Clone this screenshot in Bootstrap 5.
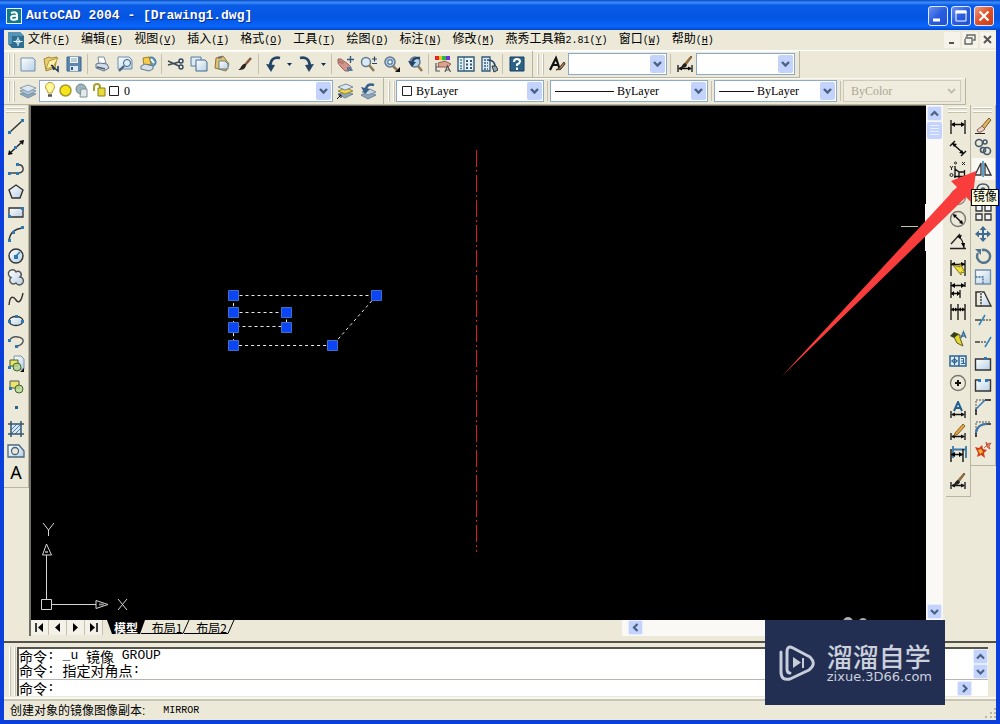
<!DOCTYPE html>
<html lang="zh-CN">
<head>
<meta charset="utf-8">
<meta name="viewport" content="width=device-width, initial-scale=1">
<title>AutoCAD 2004 - [Drawing1.dwg]</title>
<link href="https://cdn.jsdelivr.net/npm/bootstrap@5.3.0/dist/css/bootstrap.min.css" rel="stylesheet">
<style>
:root{--face:#ece9d8;--edge:#b9b5a3}
body{font:12px/16px "Liberation Sans","Noto Sans CJK SC",sans-serif;color:#000;background:var(--face)}
button{color:#000}
.frame{border:solid #0b3fdc;border-width:0 4px 4px}
.titlebar{height:30px;margin:0 -4px;padding:2px 6px 0;background:linear-gradient(#0a48c8,#3a8cf8 8%,#0a5ce8 18%,#0455e2 60%,#0a66fc 88%,#0448c8);color:#fff}
.titlebar h1{font:bold 13px/18px "Liberation Mono",monospace;text-shadow:1px 1px #0a2f90}
.winbtns{gap:3px}
.winbtn{width:20px;height:20px;padding:0;border:1px solid #dfe9ff;border-radius:3px;background:linear-gradient(135deg,#6c93f2,#2a5ce0 50%,#2250d0);line-height:0}
.winbtn.shut{background:linear-gradient(135deg,#f09a7c,#dd5028 50%,#c83c18)}
.menubar{height:20px}
.menubar a{color:#000;text-decoration:none;margin-right:11px;white-space:nowrap;line-height:18px}
.menubar kbd{all:unset;font:10px/18px "Liberation Mono",monospace}
.mdis{gap:2px}
.mdi{width:16px;height:16px;padding:0;border:0;background:#f6f4ea;line-height:0}
.bars{border-top:1px solid #fff}
.strip{height:27px;border-right:1px solid var(--edge);border-bottom:1px solid var(--edge);box-shadow:inset 0 1px #fbfaf3}
.grip{width:6px;height:21px;margin-right:2px;border:solid #fff;border-width:0 1px;box-shadow:1px 0 #c5c1ae,inset 1px 0 #c5c1ae;flex:none}
.tool{width:23px;height:22px;padding:0;border:0;background:none;display:flex;align-items:center;justify-content:center;flex:none}
.tool svg{width:18px;height:18px}
.more{width:11px}
.vsep{width:1px;height:20px;margin:0 2px;background:#c5c1ae;flex:none}
.combo + .vsep{margin-left:3px}
.combo{height:22px;border:1px solid #8ba9c8;background:#fff;padding:1px 1px 1px 4px;flex:none}
.combo select{appearance:none;border:0;padding:0 16px 0 3px;height:18px;min-width:0;outline:0;color:#000;font:12px/18px "Liberation Serif",serif;background:url("data:image/svg+xml,%3Csvg xmlns='http://www.w3.org/2000/svg' width='15' height='18'%3E%3Crect width='15' height='18' rx='2' fill='%23c3d3fb'/%3E%3Cpath d='M4 7l3.5 3.5L11 7' fill='none' stroke='%234a6186' stroke-width='2.4'/%3E%3C/svg%3E") right center no-repeat}
.combo.off{background:#f0eddf;border-color:#cdcabd}
.combo.off select{color:#aaa794;opacity:1;background-image:url("data:image/svg+xml,%3Csvg xmlns='http://www.w3.org/2000/svg' width='15' height='18'%3E%3Cpath d='M4 7l3.5 3.5L11 7' fill='none' stroke='%23c2bfae' stroke-width='2'/%3E%3C/svg%3E")}
.rail{width:25px;padding:10px 0 4px;border-right:1px solid var(--edge);border-bottom:1px solid var(--edge);position:relative;display:grid;grid-auto-rows:1fr;justify-items:center}
.rail::before{content:"";position:absolute;left:2px;right:3px;top:2px;height:5px;border:solid #fff;border-width:1px 0;box-shadow:0 1px #c5c1ae,inset 0 1px #c5c1ae}
.rail .tool{height:auto;min-height:0}
.rail-draw{height:383px}.rail-mod{height:361px}
.rail.rail-dim{display:block}
.rail.rail-dim .tool{height:22px}
.rail-dim hr{height:1px;margin:2px 3px;border:0;background:#bdb9a7;opacity:1}
.letter{font:18px/20px "Noto Sans",sans-serif}
.hot{background:#f9f8f3!important}
.canvas{background:#000;border:solid #716f64;border-width:1px 0 0 2px;min-height:0}
.canvas svg{display:block;width:100%;height:100%}
.track{background:#faf9f6}
.vscroll{width:17px;padding:1px}
.rails{padding-left:3px}
.sb{width:15px;height:15px;padding:0;border:1px solid #e6edff;border-radius:2px;background:#c3d3fb;line-height:0;display:block;flex:none}
.thumb{height:17px;margin-top:1px;border-radius:2px;background:repeating-linear-gradient(#e8efff 0 1px,#c3d3fb 1px 3px);border:3px solid #c3d3fb}
.sheets{height:16px;border-left:2px solid #716f64}
.sheets .nav-key{width:18px;height:15px;padding:0;border:0;border-right:1px solid #c5c1ae;background:#f4f2e8;line-height:0}
.sheet{padding:0;border:0;background:none;font:12px/14px "Noto Sans CJK SC",sans-serif;height:15px;position:relative}
.sheet svg{position:absolute;left:0;top:0;width:100%;height:14px;overflow:visible}
.sheet span{position:relative}
.hscroll{width:305px;padding-left:6px}
.cmd{margin-top:5px;border-top:2px solid #55534a;padding:4px 8px 3px 5px}
.cmd .grip{height:auto}
.cmdbox{border:solid #55534a;border-width:2px 0 0 2px;background:#fff;font:14px/14px "Noto Sans CJK SC",sans-serif}
.cmdbox i{font:13px/14px "Liberation Mono",monospace;white-space:pre}
.cmdline{display:flex;align-items:center;height:14px}
.cmdbox .ask{height:17px;border-top:1px solid #b7b5ad}
.cmdbox input{border:0;outline:0;padding:0;min-width:0;height:14px}
.status{height:21px;border-top:2px solid #c9c6b8;box-shadow:0 -2px #f8f7f0;padding:0 0 0 6px;line-height:20px}
.status b{font:10px/20px "Liberation Mono",monospace;margin-left:18px}
.tip{position:absolute;left:971px;top:189px;padding:0 1px;background:#ffffe1;border:1px solid #000;line-height:15px;white-space:nowrap;z-index:5}
.pointer{position:absolute;left:780px;top:168px;width:200px;height:210px;z-index:4;pointer-events:none}
.stamp{position:absolute;left:765px;top:620px;width:180px;height:85px;background:#232f52;color:#cbd0dc;z-index:6;padding:0 13px 0 14px}
.stamp strong{font:500 26px/28px "Noto Sans CJK SC",sans-serif}
.stamp small{font:13px/13px "DejaVu Sans",sans-serif}
</style>
</head>
<body>
<svg width="0" height="0" class="position-absolute" aria-hidden="true"><defs>
<linearGradient id="pg" x1="0" y1="0" x2="1" y2="1"><stop offset="0" stop-color="#fff"/><stop offset="1" stop-color="#b7cfe4"/></linearGradient>
<g id="dimline" fill="none" stroke="#111"><path d="M2 10v7M16 10v7M3 13.500h12" stroke-width="1.300"/><path d="M2 13.500l4-2v4zM16 13.500l-4-2v4z" fill="#111" stroke="none"/></g>
<g id="pencil"><path d="M6 10l8-9 2 2-7 8-4 2z" fill="#e8a53c" stroke="#6b4a1c" stroke-width=".8"/></g>
<g id="brush"><path d="M15 1l1 1-6 8-2-1z" fill="#a8743e" stroke="#5a3c1c" stroke-width=".7"/><path d="M9 8l2 2c-1 3-4 3-7 3 2-1 2-4 5-5z" fill="#222"/></g>
</defs></svg>

<div class="frame min-vh-100 d-flex flex-column">
<header class="titlebar d-flex align-items-center">
  <svg width="16" height="16" viewBox="0 0 16 16" class="me-1"><rect width="16" height="16" fill="#e9f4f6"/><rect x="1" y="1" width="14" height="14" fill="#14798b"/><path d="M5 5q6-2 6 2v5M11 8q-6-1-6 2t6 1" fill="none" stroke="#fff" stroke-width="2"/></svg>
  <h1 class="m-0 flex-fill">AutoCAD 2004 - [Drawing1.dwg]</h1>
  <div class="winbtns d-flex">
    <button class="winbtn" aria-label="最小化"><svg width="18" height="18"><path d="M4 13h7" stroke="#fff" stroke-width="3"/></svg></button>
    <button class="winbtn" aria-label="最大化"><svg width="18" height="18"><path d="M4 5v9h10V4H4z" fill="none" stroke="#fff"/><path d="M3.500 5h11" stroke="#fff" stroke-width="3"/></svg></button>
    <button class="winbtn shut" aria-label="关闭"><svg width="18" height="18"><path d="M4.500 4.500l9 9m0-9l-9 9" stroke="#fff" stroke-width="2.200"/></svg></button>
  </div>
</header>

<nav class="menubar d-flex align-items-center ps-1">
  <svg width="16" height="16" viewBox="0 0 16 16" class="me-1 flex-shrink-0"><path d="M0 0h12l4 4v12H4l-4-4z" fill="#2e6e93"/><path d="M0 0h4v12L0 12zM0 0h12l4 4H5z" fill="#5794b5"/><path d="M10 5v9M5.500 9.500h9" stroke="#fff"/><circle cx="10" cy="9.500" r="2" fill="none" stroke="#bde6f2"/></svg>
  <span class="d-flex flex-fill">
  <a href="#">文件<kbd>(<u>F</u>)</kbd></a><a href="#">编辑<kbd>(<u>E</u>)</kbd></a><a href="#">视图<kbd>(<u>V</u>)</kbd></a><a href="#">插入<kbd>(<u>I</u>)</kbd></a><a href="#">格式<kbd>(<u>O</u>)</kbd></a><a href="#">工具<kbd>(<u>T</u>)</kbd></a><a href="#">绘图<kbd>(<u>D</u>)</kbd></a><a href="#">标注<kbd>(<u>N</u>)</kbd></a><a href="#">修改<kbd>(<u>M</u>)</kbd></a><a href="#">燕秀工具箱<kbd>2.81(<u>Y</u>)</kbd></a><a href="#">窗口<kbd>(<u>W</u>)</kbd></a><a href="#">帮助<kbd>(<u>H</u>)</kbd></a>
  </span>
  <span class="mdis d-flex">
    <button class="mdi" aria-label="最小化窗口"><svg width="16" height="16"><path d="M5 11h5" stroke="#555" stroke-width="2"/></svg></button>
    <button class="mdi" aria-label="还原窗口"><svg width="16" height="16"><path d="M5 5V3h8v5h-2M3 7v5h7V6H3" fill="none" stroke="#666" stroke-width="1.400"/></svg></button>
    <button class="mdi" aria-label="关闭窗口"><svg width="16" height="16"><path d="M4 4l7 7m0-7l-7 7" stroke="#555" stroke-width="2"/></svg></button>
  </span>
</nav>

<div class="bars">
<div class="d-flex">
  <div class="strip d-flex align-items-center ps-1">
    <span class="grip"></span>
    <button class="tool" aria-label="新建"><svg viewBox="0 0 18 18"><path d="M2 3h12l2 2v11H2z" fill="url(#pg)" stroke="#6f8fb0"/></svg></button>
    <button class="tool" aria-label="打开"><svg viewBox="0 0 18 18"><path d="M2 4l5-2 2 1 6-1-2 11-9 3z" fill="#e8ce73" stroke="#a58a35"/><path d="M4 14l3-8 9-3-5 9z" fill="#fff1a7" stroke="#b79b3e"/><path d="M9 10l7 6v-5M10 10l2 5" stroke="#223a55" fill="none" stroke-width="1.600"/></svg></button>
    <button class="tool" aria-label="保存"><svg viewBox="0 0 18 18"><path d="M2 2h14v14H2z" fill="#5f87ae" stroke="#3c638c"/><path d="M5 2h8v6H5z" fill="#edf5fb"/><path d="M6 4h6M6 6h6" stroke="#8aa"/><path d="M5 11h8v5H5z" fill="#dce9f3"/><path d="M6 12h2v3H6z" fill="#34597f"/></svg></button>
    <span class="vsep"></span>
    <button class="tool" aria-label="打印"><svg viewBox="0 0 18 18"><path d="M5 2l6 0 2 6-7 1z" fill="#fff" stroke="#7b8ea3"/><path d="M3 9l4-1 7 1 2 4-5 3-8-3z" fill="#d4dbe5" stroke="#60758c"/><path d="M4 12l8 2" stroke="#45627f" stroke-width="1.500"/></svg></button>
    <button class="tool" aria-label="打印预览"><svg viewBox="0 0 18 18"><path d="M2 2h11l3 3v9H2z" fill="url(#pg)" stroke="#6f8fb0"/><circle cx="11" cy="8" r="3.500" fill="#dcefff" stroke="#3c5a78"/><path d="M8 11l-5 5" stroke="#496580" stroke-width="2.400"/></svg></button>
    <button class="tool" aria-label="发布"><svg viewBox="0 0 18 18"><circle cx="12" cy="7" r="5" fill="#5d9bc7" stroke="#47718f"/><path d="M4 3l6-1 2 7-7 2z" fill="#f6cc4c" stroke="#a37e25"/><path d="M2 11l4-2 8 2v3l-4 2-8-2z" fill="#d9dfe7" stroke="#627890"/><path d="M12 4l3 4" stroke="#fff" stroke-width="2"/></svg></button>
    <span class="vsep"></span>
    <button class="tool" aria-label="剪切"><svg viewBox="0 0 18 18"><path d="M1 6l11 5M1 10l11-3" stroke="#3d4b59" stroke-width="1.500"/><circle cx="14" cy="6" r="2" fill="none" stroke="#33475d" stroke-width="1.400"/><circle cx="14" cy="12" r="2" fill="none" stroke="#33475d" stroke-width="1.400"/></svg></button>
    <button class="tool" aria-label="复制"><svg viewBox="0 0 18 18"><path d="M1 2h10v9H1z" fill="#dceaf5" stroke="#557b9e"/><path d="M6 5h9l2 2v9H6z" fill="url(#pg)" stroke="#41698f"/></svg></button>
    <button class="tool" aria-label="粘贴"><svg viewBox="0 0 18 18"><path d="M3 3l7-2 6 8-3 7-11-3z" fill="#e0c26c" stroke="#8f7736"/><path d="M6 6h6l3 3v5H6z" fill="url(#pg)" stroke="#6b7d8c"/><path d="M5 3l4-1" stroke="#69747e" stroke-width="2"/></svg></button>
    <button class="tool" aria-label="特性匹配"><svg viewBox="0 0 18 18"><path d="M15 3L8 11" stroke="#87593a" stroke-width="2.600"/><path d="M10 9c0 5-3 6-8 6 3-1 3-5 6-6z" fill="#2b2520"/></svg></button>
    <span class="vsep"></span>
    <button class="tool" aria-label="放弃"><svg viewBox="0 0 18 18"><path d="M16 3Q7 1 6 11" fill="none" stroke="#244466" stroke-width="2.600"/><path d="M2 9l5 8 4-7z" fill="#244466"/></svg></button>
    <button class="tool more" aria-label="放弃列表"><svg viewBox="0 0 11 18"><path d="M3 8h5l-2.500 3z" fill="#12305e"/></svg></button>
    <button class="tool" aria-label="重做"><svg viewBox="0 0 18 18"><path d="M2 3Q11 1 12 11" fill="none" stroke="#244466" stroke-width="2.600"/><path d="M16 9l-5 8-4-7z" fill="#244466"/></svg></button>
    <button class="tool more" aria-label="重做列表"><svg viewBox="0 0 11 18"><path d="M3 8h5l-2.500 3z" fill="#12305e"/></svg></button>
    <span class="vsep"></span>
    <button class="tool" aria-label="实时平移"><svg viewBox="0 0 18 18"><path d="M1 4l3 0 7 5 3 3-2 4H8L4 12 1 8z" fill="#d6958a" stroke="#9b6259"/><path d="M2 7l4 2M1 5l6 3" stroke="#a86d64"/><path d="M10 12l4 0 2 4h-6z" fill="#58799f"/><path d="M13.500 1v7M10 4.500h7" stroke="#345577" stroke-width="1.300"/></svg></button>
    <button class="tool" aria-label="实时缩放"><svg viewBox="0 0 18 18"><circle cx="6" cy="7" r="4.500" fill="#d8eaf6" stroke="#65798c" stroke-width="1.500"/><path d="M9 10l5 6" stroke="#8c7a55" stroke-width="2.500"/><path d="M12 4h5M14.500 1.500v5M12 8.500h5" stroke="#244466" stroke-width="1.200"/></svg></button>
    <button class="tool" aria-label="窗口缩放"><svg viewBox="0 0 18 18"><circle cx="7" cy="7" r="5" fill="#b6d3e9" stroke="#65798c" stroke-width="1.500"/><path d="M5 5h4v4H5z" fill="#fff" stroke="#2d5e8d"/><path d="M10 11l4 4" stroke="#8c7a55" stroke-width="2.500"/><path d="M17 12v5h-5z" fill="#111"/></svg></button>
    <button class="tool" aria-label="缩放上一个"><svg viewBox="0 0 18 18"><circle cx="9" cy="7" r="5" fill="#b6d3e9" stroke="#65798c" stroke-width="1.500"/><path d="M12 11l4 5" stroke="#8c7a55" stroke-width="2.500"/><path d="M14 3Q7 2 6 8" fill="none" stroke="#244466" stroke-width="2.400"/><path d="M2 6l4 6 4-5z" fill="#244466"/></svg></button>
    <span class="vsep"></span>
    <button class="tool" aria-label="特性"><svg viewBox="0 0 18 18"><path d="M1 1h4v4H1z" fill="#e22"/><path d="M5 1h3v4H5z" fill="#e6c91c"/><path d="M8 1h4v4H8z" fill="#2aba45"/><path d="M12 1h4v4h-4z" fill="#6c35d8"/><path d="M4 8l7-2 6 3-3 3-9 0z" fill="#dca28d" stroke="#945d4c"/><path d="M2 8v8h4M2 12h3M11 17l2.500-6 3 6M12 15h4" fill="none" stroke="#555" stroke-width="1.200"/></svg></button>
    <button class="tool" aria-label="设计中心"><svg viewBox="0 0 18 18"><path d="M1 2h16v14H1z" fill="#eaf4fa" stroke="#315878" stroke-width="1.400"/><path d="M7 2v14" stroke="#315878"/><path d="M3 5h2M3 8h2M3 11h2M3 13.500h2" stroke="#3e8496" stroke-width="1.500"/><path d="M9 5h2v2H9zM13 5h2v2h-2zM9 8.500h2v2H9zM13 8.500h2v2h-2zM9 12h2v2H9zM13 12h2v2h-2z" fill="#315878"/></svg></button>
    <button class="tool" aria-label="工具选项板"><svg viewBox="0 0 18 18"><path d="M2 2h8v14H2z" fill="#dcecf7" stroke="#315878" stroke-width="1.300"/><path d="M4 5h4M4 8h4M4 11h4M4 14h4" stroke="#315878" stroke-width="1.500" stroke-dasharray="2 1"/><path d="M8 5q7 0 7 7" fill="none" stroke="#244466" stroke-width="1.500"/><path d="M12 11h4l2 4-4 2z" fill="#8fa9bb" stroke="#333"/></svg></button>
    <span class="vsep"></span>
    <button class="tool" aria-label="帮助"><svg viewBox="0 0 18 18"><path d="M2 2h14v14H2z" fill="#2b6387" stroke="#163f60"/><path d="M6 7q0-3 3-3t3 2.500q0 1.500-3 3V11M9 12.500V15" fill="none" stroke="#fff" stroke-width="2"/></svg></button>
    <span class="ms-1"></span>
  </div>
  <div class="strip d-flex align-items-center ps-1 pe-1">
    <span class="grip"></span>
    <button class="tool" aria-label="文字样式"><svg viewBox="0 0 18 18"><path d="M2 15L8 3l4 12M4 10h7" fill="none" stroke="#111" stroke-width="2.200"/><path d="M16 7l-5 6-3 2 5-1 4-5z" fill="#a17a5c" stroke="#4c3524"/></svg></button>
    <div class="combo d-flex" style="width:99px"><select class="flex-fill" aria-label="文字样式控制"><option></option></select></div>
    <span class="vsep"></span>
    <button class="tool" aria-label="标注样式"><svg viewBox="0 0 18 18"><use href="#dimline"/><use href="#brush"/></svg></button>
    <div class="combo d-flex" style="width:99px"><select class="flex-fill" aria-label="标注样式控制"><option></option></select></div>
  </div>
</div>
<div class="d-flex">
  <div class="strip d-flex align-items-center ps-1 pe-1">
    <span class="grip"></span>
    <button class="tool" aria-label="图层特性管理器"><svg viewBox="0 0 18 18"><g stroke="#718a9f" stroke-width=".8"><path d="M1 12l8-3 8 3-8 4z" fill="#8da7bd"/><path d="M1 9l8-3 8 3-8 4z" fill="#b5c8d6"/><path d="M1 6l8-3 8 3-8 4z" fill="#dce8ef"/></g></svg></button>
    <div class="combo d-flex align-items-center" style="width:294px">
      <svg width="77" height="18" viewBox="0 0 77 18" class="flex-shrink-0"><path d="M4 11q0-2-2-4a4.500 4.500 0 1 1 8 0q-2 2-2 4z" fill="#fff79a" stroke="#b8a12b"/><path d="M4 13.500h4" stroke="#555" stroke-width="2.500"/><circle cx="21.500" cy="8.500" r="5.500" fill="#f6e51a" stroke="#a6992b" stroke-width="1.500"/><circle cx="37" cy="7" r="5" fill="#9eb5bd" stroke="#71898f"/><path d="M37 7h6v8h-7z" fill="#e3eaec" stroke="#7d9093"/><path d="M50 9V5q0-3 3-3t3 3v3" fill="none" stroke="#a9a12b" stroke-width="2"/><path d="M54 6h7v8h-7z" fill="#e8db38" stroke="#877f1e"/><path d="M65.500 4.500h9v9h-9z" fill="#fff" stroke="#222"/></svg>
      <select class="flex-fill" aria-label="图层"><option>0</option></select></div>
    <button class="tool" aria-label="将对象的图层置为当前"><svg viewBox="0 0 18 18"><path d="M2 12l8-3 7 3-8 4z" fill="#8da7bd" stroke="#6f8496"/><path d="M2 9l8-3 7 3-8 3z" fill="#f0d44b" stroke="#9b8a2f"/><path d="M2 5l8-3 7 3-8 3z" fill="#dce8ef" stroke="#788c9d"/><path d="M1 17l4-4M2.500 13H5v3" stroke="#111" fill="none"/></svg></button>
    <button class="tool" aria-label="上一个图层"><svg viewBox="0 0 18 18"><path d="M2 13l8-3 7 3-8 4z" fill="#8da7bd" stroke="#6f8496"/><path d="M3 10l8-3 6 3-8 3z" fill="#c6d6e0" stroke="#788c9d"/><path d="M15 3Q8 1 7 7" fill="none" stroke="#375f8c" stroke-width="2.600"/><path d="M2 5l4 7 5-5z" fill="#375f8c"/></svg></button>
  </div>
  <div class="strip d-flex align-items-center ps-1 pe-1">
    <span class="grip"></span>
    <div class="combo d-flex align-items-center" style="width:148px"><svg width="12" height="12" class="flex-shrink-0"><path d="M1.500 1.500h9v9h-9z" fill="none" stroke="#222"/></svg><select class="flex-fill" aria-label="颜色"><option>ByLayer</option></select></div>
    <span class="vsep"></span>
    <div class="combo d-flex align-items-center" style="width:158px"><svg width="59" height="3" class="flex-shrink-0"><path d="M0 1.500h59" stroke="#111"/></svg><select class="flex-fill" aria-label="线型"><option>ByLayer</option></select></div>
    <span class="vsep"></span>
    <div class="combo d-flex align-items-center" style="width:123px"><svg width="35" height="3" class="flex-shrink-0"><path d="M0 1.500h35" stroke="#111"/></svg><select class="flex-fill" aria-label="线宽"><option>ByLayer</option></select></div>
    <span class="vsep"></span>
    <div class="combo off d-flex align-items-center" style="width:118px"><select class="flex-fill" aria-label="打印样式" disabled><option>ByColor</option></select></div>
  </div>
</div>
</div>

<main class="d-flex flex-fill">
  <div class="rail rail-draw flex-shrink-0" role="toolbar" aria-label="绘图">
    <button class="tool" aria-label="直线"><svg viewBox="0 0 18 18"><path d="M3 15L15 4" stroke="#333" stroke-width="1.500"/><path d="M1 14h3v3H1zM14 2h3v3h-3z" fill="#2a7ab8"/></svg></button>
    <button class="tool" aria-label="构造线"><svg viewBox="0 0 18 18"><path d="M2 16L16 3" stroke="#222" stroke-width="1.500"/><path d="M1 17l1-5 4 4zM17 2l-5 1 4 4z" fill="#111"/><path d="M7 8h3v3H7z" fill="#2a7ab8"/></svg></button>
    <button class="tool" aria-label="多段线"><svg viewBox="0 0 18 18"><path d="M2 13h10q5-1 4-5t-5-3" fill="none" stroke="#444" stroke-width="1.500"/><path d="M1 12h3v3H1zM9 12h3v3H9zM9 3h3v3H9z" fill="#2a7ab8"/></svg></button>
    <button class="tool" aria-label="正多边形"><svg viewBox="0 0 18 18"><path d="M9 3l7 5-3 8H5L2 8z" fill="url(#pg)" stroke="#333" stroke-width="1.400"/></svg></button>
    <button class="tool" aria-label="矩形"><svg viewBox="0 0 18 18"><path d="M2 5h14v9H2z" fill="url(#pg)" stroke="#333" stroke-width="1.300"/><path d="M1 12h3v3H1zM14 4h3v3h-3z" fill="#2a7ab8"/></svg></button>
    <button class="tool" aria-label="圆弧"><svg viewBox="0 0 18 18"><path d="M2 16Q3 4 16 3" fill="none" stroke="#333" stroke-width="1.400"/><path d="M1 14h3v3H1zM5 6h3v3H5zM14 1h3v3h-3z" fill="#2a7ab8"/></svg></button>
    <button class="tool" aria-label="圆"><svg viewBox="0 0 18 18"><circle cx="9" cy="9" r="7" fill="url(#pg)" stroke="#333" stroke-width="1.400"/><path d="M9 9l4-4" stroke="#2a7ab8" stroke-width="1.400"/><path d="M7 8h4v4H7z" fill="#2a7ab8"/></svg></button>
    <button class="tool" aria-label="修订云线"><svg viewBox="0 0 18 18"><path d="M4 9.500A4 4 0 1 1 9 4a3 3 0 1 1 4 5 4 4 0 1 1-4 6 3.500 3.500 0 1 1-5-5.500z" fill="url(#pg)" stroke="#555" stroke-width="1.400"/></svg></button>
    <button class="tool" aria-label="样条曲线"><svg viewBox="0 0 18 18"><path d="M2 15C3 4 7 7 9 10s5 3 7-7" fill="none" stroke="#333" stroke-width="1.400"/></svg></button>
    <button class="tool" aria-label="椭圆"><svg viewBox="0 0 18 18"><ellipse cx="9" cy="9" rx="7" ry="4.500" fill="url(#pg)" stroke="#333" stroke-width="1.300"/><path d="M1 8h3v3H1zM14 8h3v3h-3zM8 3h3v3H8z" fill="#2a7ab8"/></svg></button>
    <button class="tool" aria-label="椭圆弧"><svg viewBox="0 0 18 18"><path d="M3 7q2-4 8-3 6 1 5 5-2 4-7 4" fill="none" stroke="#555" stroke-width="1.500"/><path d="M1 6h3v3H1zM8 12h3v3H8z" fill="#2a7ab8"/></svg></button>
    <button class="tool" aria-label="插入块"><svg viewBox="0 0 18 18"><path d="M7 1h7l3 3v10H7z" fill="url(#pg)" stroke="#7893aa"/><path d="M3 5h8v6H3z" fill="#e9e46b" stroke="#48632b"/><circle cx="10" cy="12" r="4" fill="#b7d88e" fill-opacity=".8" stroke="#48632b"/><path d="M1 11h3v3H1z" fill="#2a7ab8"/><path d="M17 13v4h-4z" fill="#111"/></svg></button>
    <button class="tool" aria-label="创建块"><svg viewBox="0 0 18 18"><path d="M3 4h9v7H3z" fill="#e9e46b" stroke="#555"/><circle cx="12" cy="12" r="4" fill="#b7d88e" fill-opacity=".8" stroke="#48632b"/><path d="M2 10h3v3H2z" fill="#2a7ab8"/></svg></button>
    <button class="tool" aria-label="点"><svg viewBox="0 0 18 18"><path d="M8 8h3v3H8z" fill="#24618e"/></svg></button>
    <button class="tool" aria-label="图案填充"><svg viewBox="0 0 18 18"><path d="M4 4h10v10H4z" fill="#d4e7f5"/><path d="M4 10l6-6M4 14L14 4M8 14l6-6" stroke="#4e7fa6"/><path d="M4 1v16M14 1v16M1 4h16M1 14h16" stroke="#36566f" stroke-width="1.500"/></svg></button>
    <button class="tool" aria-label="面域"><svg viewBox="0 0 18 18"><path d="M1 3h11l5 6v6H1z" fill="url(#pg)" stroke="#4b6780" stroke-width="1.300"/><circle cx="8" cy="9" r="3.500" fill="#ece9d8" stroke="#4b6780" stroke-width="1.300"/></svg></button>
    <button class="tool letter" aria-label="多行文字">A</button>
  </div>

  <div class="d-flex flex-column flex-fill">
    <div class="d-flex flex-fill">
      <div class="canvas flex-fill d-flex">
        <svg role="img" aria-label="绘图区"><g transform="translate(-31 -106)">
          <path d="M476.500 150v402" stroke="#e01824" stroke-dasharray="17 3 2 3"/>
          <path d="M233.500 295.500h143l-44 50h-99zM233.500 312.500h53v14h-53" fill="none" stroke="#e8e8e8" stroke-dasharray="3 3"/>
          <g fill="#0b45f5" stroke="#3f70c8"><path d="M228.500 290.500h10v10h-10zM371.500 290.500h10v10h-10zM228.500 307.500h10v10h-10zM281.500 307.500h10v10h-10zM228.500 322.500h10v10h-10zM281.500 322.500h10v10h-10zM228.500 340.500h10v10h-10zM327.500 340.500h10v10h-10z"/></g>
          <g fill="none" stroke="#d6d6d6"><path d="M41.500 599.500h10v10h-10zM46.500 599v-44M52 604.500h44M46.500 544l-4 11h9zM108 604.500l-12-4v8zM43 523l5.500 7 5.500-7M48.500 530v6M118 599l9 11M127 599l-9 11"/><path d="M45 552h3M99 604.500h5" stroke-width="2" stroke="#888"/></g>
          <path d="M901 226.500h17" stroke="#c6c6a6"/><path d="M925.500 204v47" stroke="#fff"/>
          <g fill="#a9adb4"><circle cx="848" cy="622" r="5"/><circle cx="863" cy="622" r="4"/></g>
        </g></svg>
      </div>
      <div class="track vscroll d-flex flex-column flex-shrink-0">
        <button class="sb" aria-label="向上滚动"><svg width="13" height="13"><path d="M3 8.500L6.500 5 10 8.500" fill="none" stroke="#4a6186" stroke-width="2.200"/></svg></button>
        <div class="thumb"></div>
        <button class="sb mt-auto" aria-label="向下滚动"><svg width="13" height="13"><path d="M3 5l3.500 3.500L10 5" fill="none" stroke="#4a6186" stroke-width="2.200"/></svg></button>
      </div>
    </div>
    <div class="sheets d-flex">
      <button class="nav-key" aria-label="第一个布局"><svg width="17" height="15"><path d="M5 3v9" stroke="#000" stroke-width="1.500"/><path d="M12 3v9L7 7.500z"/></svg></button>
      <button class="nav-key" aria-label="上一个布局"><svg width="17" height="15"><path d="M11 3v9L6 7.500z"/></svg></button>
      <button class="nav-key" aria-label="下一个布局"><svg width="17" height="15"><path d="M6 3v9l5-4.500z"/></svg></button>
      <button class="nav-key" aria-label="最后一个布局"><svg width="17" height="15"><path d="M12 3v9" stroke="#000" stroke-width="1.500"/><path d="M5 3v9l5-4.500z"/></svg></button>
      <button class="sheet text-white fw-bold ms-1" style="width:38px"><svg viewBox="0 0 38 14"><path d="M0 0h38l-5 14H5z"/></svg><span>模型</span></button>
      <button class="sheet" style="width:44px"><svg viewBox="0 0 44 14"><path d="M-4 13.500h42l6-13.500" fill="none" stroke="#000"/></svg><span>布局1</span></button>
      <button class="sheet" style="width:45px"><svg viewBox="0 0 45 14"><path d="M-5 13.500h44l6-13.500" fill="none" stroke="#000"/></svg><span>布局2</span></button>
      <div class="hscroll track d-flex ms-auto me-3"><button class="sb" aria-label="向左滚动"><svg width="13" height="13"><path d="M8.500 3L5 6.500 8.500 10" fill="none" stroke="#4a6186" stroke-width="2.200"/></svg></button></div>
    </div>
  </div>

  <div class="rails d-flex flex-shrink-0">
    <div class="rail rail-dim align-self-start" role="toolbar" aria-label="标注">
      <button class="tool" aria-label="线性标注"><svg viewBox="0 0 18 18"><path d="M2 3v14M16 3v14M3 7.500h12" stroke="#111" stroke-width="1.300"/><path d="M2 7.500l4-2.500v5zM16 7.500L12 5v5z"/></svg></button>
      <button class="tool" aria-label="对齐标注"><svg viewBox="0 0 18 18"><path d="M1 7l5-5M12 17l5-5M4 5l10 9" stroke="#111" stroke-width="1.400"/><path d="M3 4l5 1-3 3zM15 15l-5-1 3-3z"/></svg></button>
      <button class="tool" aria-label="坐标标注"><svg viewBox="0 0 18 18"><path d="M6 5v12M5 15.500h12M6 8l4 3h6M15.500 9v8M10 11v6" fill="none" stroke="#111" stroke-width="1.300"/><path d="M1 5l1.500 2L4 5M2.500 7v2M13 1l3 3m0-3l-3 3" fill="none" stroke="#222"/><circle cx="2.500" cy="14" r="1.500" fill="none" stroke="#222"/><circle cx="6.500" cy="2" r="1" fill="none" stroke="#222"/></svg></button>
      <hr>
      <button class="tool" aria-label="半径标注"><svg viewBox="0 0 18 18"><circle cx="9" cy="9" r="7.500" fill="none" stroke="#8a8a82" stroke-width="1.400"/><path d="M9 9l5-5" stroke="#111" stroke-width="1.400"/></svg></button>
      <button class="tool" aria-label="直径标注"><svg viewBox="0 0 18 18"><circle cx="9" cy="9" r="7.500" fill="none" stroke="#777770" stroke-width="1.400"/><path d="M5 5l8 8" stroke="#111" stroke-width="1.500"/><path d="M4 4l4 1-3 3zM14 14l-4-1 3-3z"/></svg></button>
      <button class="tool" aria-label="角度标注"><svg viewBox="0 0 18 18"><path d="M11 2L2 12M1 16.500h16M9 4q5 3 6 12" fill="none" stroke="#222" stroke-width="1.300"/><path d="M8 4l5-1-2 4zM15 16l-3-5 4 0z"/></svg></button>
      <hr>
      <button class="tool" aria-label="快速标注"><svg viewBox="0 0 18 18"><path d="M2 1v16M16 1v16M2 5.500h14" stroke="#111" stroke-width="1.300"/><path d="M2 5l4-2v5zM16 5l-4-2v5z"/><path d="M4 6l7 2V4l5 10-4-1v3z" fill="#efe13b" stroke="#857614"/></svg></button>
      <button class="tool" aria-label="基线标注"><svg viewBox="0 0 18 18"><path d="M2 1v16M16 1v5M11 9v8M2 4.500h14M2 12.500h9" stroke="#111" stroke-width="1.300"/><path d="M2 4.500L6 2v5zM16 4.500L12 2v5zM2 12.500L5 10v5zM11 12.500L8 10v5z"/></svg></button>
      <button class="tool" aria-label="连续标注"><svg viewBox="0 0 18 18"><path d="M2 1v16M9 1v16M16 1v16M2 6.500h14" stroke="#111" stroke-width="1.300"/><path d="M2 6.500l3-2v4zM9 6.500l-3-2v4zM9 6.500l3-2v4zM16 6.500l-3-2v4z"/></svg></button>
      <hr>
      <button class="tool" aria-label="快速引线"><svg viewBox="0 0 18 18"><path d="M5 4l6 1v3l3 8-6-3-3-6z" fill="#e5d832" stroke="#5a5718"/><path d="M1 6l4-4 5 2-5 4z" fill="#34431e"/><path d="M12 8l2.500-6L17 8M13 6h3" fill="none" stroke="#3a719c" stroke-width="1.500"/></svg></button>
      <button class="tool" aria-label="公差"><svg viewBox="0 0 18 18"><path d="M1 4h16v10H1zM10 4v10" fill="#dcebf7" stroke="#2d6392" stroke-width="1.500"/><circle cx="5.500" cy="9" r="2" fill="none" stroke="#2d6392"/><path d="M5.500 5v8M2 9h7M12 6.500h2.500v5M12 9h2M12 11.500h4" stroke="#2d6392" fill="none"/></svg></button>
      <button class="tool" aria-label="圆心标记"><svg viewBox="0 0 18 18"><circle cx="9" cy="9" r="7.500" fill="none" stroke="#777770" stroke-width="1.300"/><path d="M6 9h6M9 6v6" stroke="#111" stroke-width="2"/></svg></button>
      <hr>
      <button class="tool" aria-label="编辑标注"><svg viewBox="0 0 18 18"><use href="#dimline"/><path d="M5 10L9 1l4 9M6.500 7h5" fill="none" stroke="#235f91" stroke-width="2"/></svg></button>
      <button class="tool" aria-label="编辑标注文字"><svg viewBox="0 0 18 18"><use href="#dimline"/><use href="#pencil"/></svg></button>
      <button class="tool" aria-label="标注更新"><svg viewBox="0 0 18 18"><path d="M4 1v12M17 1v12M4 4.500h13" stroke="#3979aa" stroke-width="1.800"/><path d="M2 4v13M14 4v13M2 9.500h12" stroke="#111" stroke-width="1.400"/><path d="M2 9.500L6 7v5zM14 9.500L10 7v5z"/></svg></button>
      <hr>
      <button class="tool" aria-label="标注样式管理器"><svg viewBox="0 0 18 18"><use href="#dimline"/><use href="#brush"/></svg></button>
    </div>
    <div class="rail rail-mod align-self-start" role="toolbar" aria-label="修改">
      <button class="tool" aria-label="删除"><svg viewBox="0 0 18 18"><path d="M8 9l7-8 2 2-7 9z" fill="#e2b65d" stroke="#75592b"/><path d="M3 13l5-4 3 3-4 3H4z" fill="#f1d3c5" stroke="#8a5c4e"/><path d="M1 16.500h10" stroke="#222"/></svg></button>
      <button class="tool" aria-label="复制对象"><svg viewBox="0 0 18 18"><g fill="none" stroke="#45596c" stroke-width="1.600"><circle cx="5" cy="5" r="3.500"/><circle cx="11" cy="4" r="2"/><circle cx="9" cy="12" r="2.500"/><circle cx="13" cy="13" r="3.500"/></g></svg></button>
      <button class="tool hot" aria-label="镜像"><svg viewBox="0 0 18 18"><path d="M7 3v12H1zM11 3v12h6z" fill="#eef2f5" stroke="#333" stroke-width="1.300"/><path d="M9 1v16" stroke="#2b84bd" stroke-width="1.500"/></svg></button>
      <button class="tool" aria-label="偏移"><svg viewBox="0 0 18 18"><path d="M3 15V8q0-6 6-6t6 6v7M7 15V9q0-3 2-3t2 3v6" fill="none" stroke="#45596c" stroke-width="1.500"/></svg></button>
      <button class="tool" aria-label="阵列"><svg viewBox="0 0 18 18"><path d="M2 2h6v6H2zM11 2h6v6h-6zM2 11h6v6H2zM11 11h6v6h-6z" fill="#eef3f7" stroke="#333" stroke-width="1.300"/></svg></button>
      <button class="tool" aria-label="移动"><svg viewBox="0 0 18 18"><path d="M9 3v12M3 9h12" stroke="#3d6a94" stroke-width="2"/><path d="M9 1l3.500 4h-7zM9 17l3.500-4h-7zM1 9l4-3.500v7zM17 9l-4-3.500v7z" fill="#3d6a94"/></svg></button>
      <button class="tool" aria-label="旋转"><svg viewBox="0 0 18 18"><path d="M4 6a6.500 6.500 0 1 0 4-3h4" fill="none" stroke="#53758f" stroke-width="2.400"/><path d="M1 2h6v6z" fill="#53758f"/></svg></button>
      <button class="tool" aria-label="缩放"><svg viewBox="0 0 18 18"><path d="M1.500 2h15v14h-15z" fill="url(#pg)" stroke="#6d8eaa" stroke-width="1.300"/><path d="M1.500 9H9v7" fill="none" stroke="#3d6a94" stroke-width="1.300" stroke-dasharray="2 1"/></svg></button>
      <button class="tool" aria-label="拉伸"><svg viewBox="0 0 18 18"><path d="M7 2v14h10L10 2z" fill="url(#pg)" stroke="#333" stroke-width="1.300"/><path d="M7 2H2v14h5" fill="none" stroke="#333" stroke-width="1.500"/><path d="M7 2v14" stroke="#fff" stroke-width="1.300" stroke-dasharray="1 2"/></svg></button>
      <button class="tool" aria-label="修剪"><svg viewBox="0 0 18 18"><path d="M1 9h6" stroke="#222" stroke-width="1.300"/><path d="M9 9h8" stroke="#222" stroke-dasharray="2 1"/><path d="M5 14l6-10" stroke="#2b84bd" stroke-width="1.500"/></svg></button>
      <button class="tool" aria-label="延伸"><svg viewBox="0 0 18 18"><path d="M1 9h5" stroke="#222" stroke-width="1.300"/><path d="M7 9h6" stroke="#222" stroke-dasharray="2 1"/><path d="M11 14l6-10" stroke="#2b84bd" stroke-width="1.500"/></svg></button>
      <button class="tool" aria-label="打断于点"><svg viewBox="0 0 18 18"><path d="M1.500 4h15v11h-15z" fill="url(#pg)" stroke="#333" stroke-width="1.400"/><path d="M10 2h3v3h-3z" fill="#2a7ab8"/></svg></button>
      <button class="tool" aria-label="打断"><svg viewBox="0 0 18 18"><path d="M5 4H1.500v11h15V4H13" fill="url(#pg)" stroke="#333" stroke-width="1.400"/><path d="M4 3h3v3H4zM11 3h3v3h-3z" fill="#2a7ab8"/></svg></button>
      <button class="tool" aria-label="倒角"><svg viewBox="0 0 18 18"><path d="M2 17V2h15" fill="none" stroke="#555" stroke-dasharray="2 1"/><path d="M2 17v-6M11 2h6" stroke="#222" stroke-width="1.500"/><path d="M2 11l9-9" stroke="#3979b4" stroke-width="1.600"/></svg></button>
      <button class="tool" aria-label="圆角"><svg viewBox="0 0 18 18"><path d="M2 17V2h15" fill="none" stroke="#555" stroke-dasharray="2 1"/><path d="M2 17v-4Q3 4 13 4h4" fill="none" stroke="#222" stroke-width="1.500"/><path d="M2 13Q3 4 13 4" fill="none" stroke="#3979b4" stroke-width="2"/></svg></button>
      <button class="tool" aria-label="分解"><svg viewBox="0 0 18 18"><path d="M1 6l4 1 3-3 1 4 4 1-3 3 1 5-4-3-4 2 1-4z" fill="#cf3d1e"/><path d="M4 9l3-1 2 3-3 2z" fill="#f5b72c"/><path d="M10 7l4-4M12 1l1 2 4-1-2 3 1 3-3-2z" fill="#e9876e" stroke="#b43b20" stroke-width=".7"/></svg></button>
    </div>
  </div>
</main>

<section class="cmd d-flex" aria-label="命令行">
  <span class="grip"></span>
  <div class="cmdbox flex-fill ms-px">
    <div class="d-flex"><div class="flex-fill">
        <div class="cmdline">命令<i>: _u </i>镜像<i> GROUP</i></div>
        <div class="cmdline">命令<i>: </i>指定对角点<i>:</i></div></div>
      <div><button class="sb" aria-label="向上"><svg width="13" height="13"><path d="M3 8.500L6.500 5 10 8.500" fill="none" stroke="#4a6186" stroke-width="2.200"/></svg></button><button class="sb" aria-label="向下"><svg width="13" height="13"><path d="M3 5l3.500 3.500L10 5" fill="none" stroke="#4a6186" stroke-width="2.200"/></svg></button></div></div>
    <div class="ask d-flex align-items-center"><label for="cmdinput" class="cmdline">命令<i>:</i></label><input id="cmdinput" class="flex-fill"><button class="sb me-3" aria-label="向右"><svg width="13" height="13"><path d="M5 3l3.500 3.500L5 10" fill="none" stroke="#4a6186" stroke-width="2.200"/></svg></button></div>
  </div>
</section>

<footer class="status d-flex">
  <span>创建对象的镜像图像副本:</span><b>MIRROR</b>
  <svg width="14" height="14" class="ms-auto mt-1"><path d="M3 12h2m3 0h2M8 8h2m2 0h2M12 4h2m-2 8h2" stroke="#b8b5a4" stroke-width="2"/></svg>
</footer>
</div>

<div class="tip" role="tooltip">镜像</div>
<svg class="pointer" viewBox="780 168 200 210" aria-hidden="true"><path d="M782 376L957 187l-6-6 25-10-4 32-6-6z" fill="#f93c3c"/></svg>
<aside class="stamp d-flex align-items-center justify-content-between">
  <svg width="36" height="38" viewBox="0 0 36 38"><g fill="none" stroke="#c7cdd9" stroke-width="3" stroke-linecap="round" stroke-linejoin="round"><path d="M2 8v20q0 9 9 7l19-9q8-6 1-13L14 4Q8 1 8 8v17q0 4 3 4"/></g><path d="M14 13l8 5.500-8 5.500zM23 14h2v10h-2z" fill="#c7cdd9"/></svg>
  <div class="d-flex flex-column"><strong>溜溜自学</strong><small>zixue.3D66.com</small></div>
</aside>
<script src="https://cdn.jsdelivr.net/npm/bootstrap@5.3.0/dist/js/bootstrap.bundle.min.js"></script>
</body>
</html>
